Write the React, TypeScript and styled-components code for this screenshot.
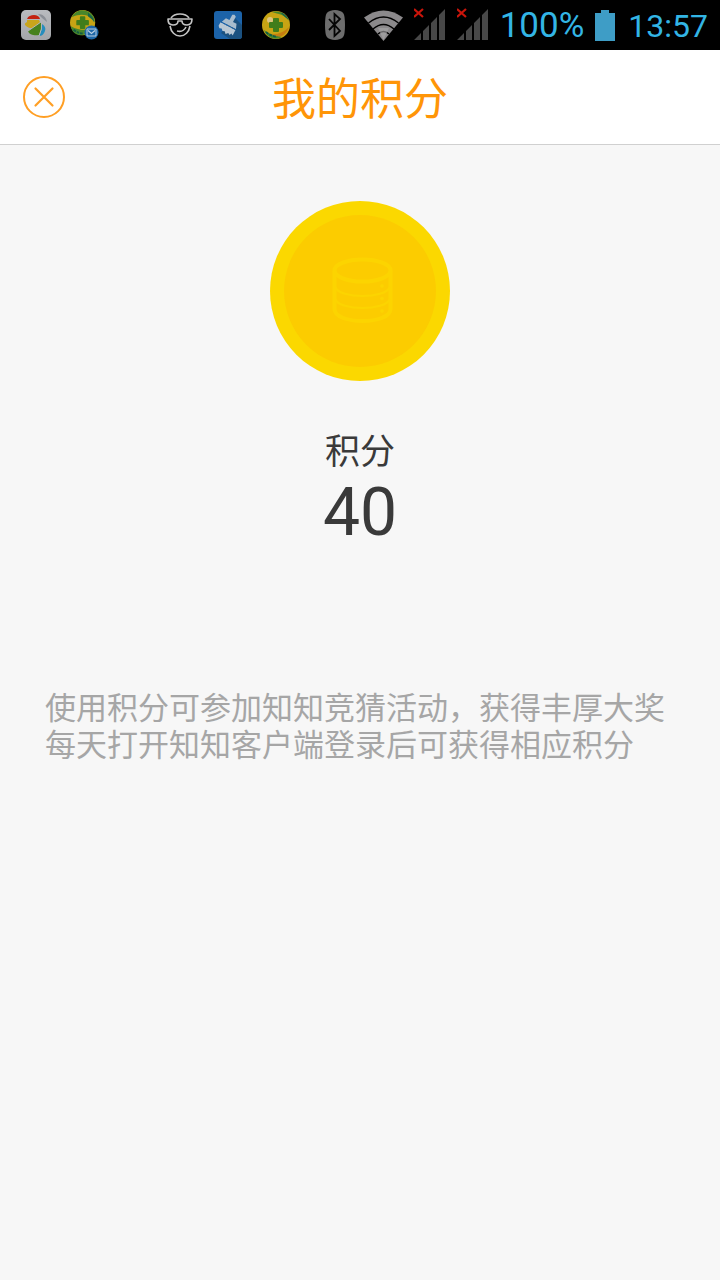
import React from 'react';
import styled, { createGlobalStyle } from 'styled-components';

const GlobalStyle = createGlobalStyle`
  *, *::before, *::after { box-sizing: border-box; }
  body {
    margin: 0;
    background: #f7f7f7;
    font-family: Roboto, "Noto Sans CJK SC", sans-serif;
  }
`;

const Screen = styled.div`
  min-height: 100vh;
  display: flex;
  flex-direction: column;
  background: #f7f7f7;
`;

const StatusBar = styled.div`
  height: 50px;
  display: flex;
  align-items: center;
  justify-content: space-between;
  padding: 0 12px;
  background: #000;
  color: #33b5e5;
`;

const Notifications = styled.div`
  display: flex;
`;

const Slot = styled.div`
  width: 48px;
  height: 50px;
  display: flex;
  align-items: center;
  justify-content: center;
`;

const Indicators = styled.div`
  display: flex;
  align-items: center;
  gap: 11px;

  svg { flex: none; }
`;

const BluetoothBox = styled.div`
  width: 28px;
  display: flex;
`;

const StatusText = styled.span<{ $size: number }>`
  font-size: ${(p) => p.$size}px;
  line-height: 50px;
  padding-top: 2px;
  white-space: nowrap;
`;

const Clock = styled(StatusText)`
  padding-left: 2px;
`;

const Header = styled.header`
  height: 95px;
  display: grid;
  grid-template-columns: 88px 1fr 88px;
  align-items: center;
  background: #fff;
  border-bottom: 1px solid #d0d0d0;
`;

const CloseButton = styled.button`
  justify-self: center;
  display: flex;
  padding: 0;
  border: 0;
  background: none;
  cursor: pointer;
`;

const Title = styled.h1`
  margin: 0;
  padding-top: 6px;
  text-align: center;
  font-size: 44px;
  font-weight: 400;
  line-height: 60px;
  color: #ff9507;
`;

const Main = styled.main`
  flex: 1;
  display: flex;
  flex-direction: column;
  padding: 56px 45px;
`;

const Score = styled.section`
  display: flex;
  flex-direction: column;
  align-items: center;
  color: #3a3a3a;
`;

const ScoreLabel = styled.h2`
  margin: 47px 0 0;
  font-size: 35px;
  font-weight: 400;
  line-height: 50px;
`;

const ScoreValue = styled.div`
  font-size: 66px;
  line-height: 70px;
`;

const Notes = styled.div`
  margin-top: 142px;
`;

const Note = styled.p`
  margin: 0;
  font-size: 31px;
  line-height: 37px;
  color: #a6a6a6;
`;

const PinwheelIcon = () => (
  <svg width="30" height="30" viewBox="0 0 30 30" aria-hidden="true">
    <defs>
      <linearGradient id="tile" x1="0" y1="0" x2="0" y2="1">
        <stop offset="0" stopColor="#b9bbbf" />
        <stop offset="1" stopColor="#a4a6aa" />
      </linearGradient>
    </defs>
    <rect width="30" height="30" rx="5" fill="url(#tile)" />
    <path d="M17 4c5 0 8 3 9 8l-5-4z" fill="#8b8f96" />
    <path d="M6 9C7 6 10 5 13 5s5 1 6 4z" fill="#c4210f" />
    <path d="M6 10h12l1 2-4 5c-4 2-8 1-10-1-2-2-1-3 1-4z" fill="#c9a51c" />
    <path d="M20 12L7 21c1 4 7 5 11 4 2-4 3-8 2-13z" fill="#46811d" />
    <path d="M21 14c3 2 4 4 3 7-1 3-3 5-6 5 2-4 3-7 3-12z" fill="#268dbd" />
    <path d="M20 12L7 21M20.500 12q1 7-2.500 14" stroke="#b3b5b9" strokeWidth="1" fill="none" />
  </svg>
);

const ShieldIcon = () => (
  <svg width="28" height="28" viewBox="0 0 28 28" aria-hidden="true">
    <circle cx="14" cy="14" r="14" fill="#c7a414" />
    <path d="M27 16c-2 6-6 11-14 10-3 0-5-1-6-3 9 1 15-2 20-7z" fill="#c57d10" />
    <path d="M10 1c7-2 15 2 17 9-3-4-6-6-10-7-3-1-5-1-7-2z" fill="#48862b" />
    <path d="M18 1c4 1 7 4 9 8l-4-3z" fill="#17644c" />
    <path d="M2 19c4 3 9 6 18 7-7 4-15 1-18-7z" fill="#48862b" />
    <path d="M4 21c3 3 7 4 11 5" stroke="#125c45" strokeWidth="2" strokeDasharray="3 1" fill="none" />
    <circle cx="8" cy="9" r="3" fill="#ddc582" />
    <path d="M12 8h4v4h4v4h-4v4h-4v-4H8v-4h4z" fill="#417d1b" stroke="#417d1b" strokeWidth="2" strokeLinejoin="round" />
  </svg>
);

const ShieldMailIcon = () => (
  <svg width="30" height="30" viewBox="0 0 30 30" aria-hidden="true">
    <g transform="translate(1 0) scale(.9)">
      <circle cx="14" cy="14" r="14" fill="#c7a414" />
      <path d="M2 8C7-2 20-2 26 7l2 7C24 7 15 2 2 8z" fill="#48862b" />
      <path d="M20 3c4 3 7 7 7 11-2-4-5-5-7-7z" fill="#17644c" />
      <path d="M1 18c5 3 10 4 16 4v5C9 30 2 26 1 18z" fill="#48862b" />
      <path d="M4 22c4 3 7 4 11 4" stroke="#125c45" strokeWidth="2" strokeDasharray="3 1" fill="none" />
      <path d="M12 8h4v4h4v4h-4v4h-4v-4H8v-4h4z" fill="#417d1b" stroke="#417d1b" strokeWidth="2" strokeLinejoin="round" />
    </g>
    <circle cx="22.500" cy="22.500" r="7" fill="#1d67a8" />
    <path d="M18 19h9v7h-9z" fill="#1d67a8" stroke="#b9cfe2" />
    <path d="M19 20.500l3.500 3 3.500-3" stroke="#b9cfe2" strokeWidth="1.200" fill="none" />
  </svg>
);

const CoolFaceIcon = () => (
  <svg width="26" height="26" viewBox="0 0 26 26" fill="none" stroke="#c4c4c4" strokeWidth="1.600" aria-hidden="true">
    <path d="M4 6C6 3 9 2 13 2s7 1 9 4M3 14c1 6 5 10 10 10s9-4 10-10" />
    <path d="M1 7h24c0 4-1 6-5 6-3 0-5-1-5-4h-4c0 3-2 4-5 4-4 0-5-2-5-6z" strokeLinejoin="round" />
    <path d="M10 19c4 1 7 0 9-4" />
  </svg>
);

const BroomIcon = () => (
  <svg width="28" height="28" viewBox="0 0 28 28" aria-hidden="true">
    <rect width="28" height="28" rx="3" fill="#1c63a9" />
    <path d="M20 6l8 8v11q0 3-3 3h-9l-9-6z" fill="#1b5180" />
    <g transform="rotate(28 14 14)">
      <path d="M15 2l2 1v6h4l2 5H7l2-5h4V3z" fill="#a9bccd" />
      <path d="M6 15h17v6l-2-1-1 2-2-1-2 2-2-2-2 1-2-2-2 1-2-2z" fill="#b9c7d4" />
      <path d="M6 14.500h17" stroke="#1c63a9" strokeDasharray="2 1" />
    </g>
  </svg>
);

const BluetoothIcon = () => (
  <svg width="20" height="30" viewBox="0 0 20 30" aria-hidden="true">
    <path d="M5 1Q10-1 15 1q4 1 4.500 6 1 8 0 16-.5 5-4.500 6-5 2-10 0-4-1-4.500-6-1-8 0-16Q1 2 5 1z" fill="#6d6d6d" />
    <path d="M4 9l11 12-5.500 5V4L15 9 4 20" fill="none" stroke="#050505" strokeWidth="1.800" />
  </svg>
);

const WifiIcon = () => (
  <svg width="39" height="31" viewBox="0 0 39 31" aria-hidden="true">
    <path d="M0 7.500Q19.500-6.500 39 7.500L19.500 31z" fill="#8b898b" />
    <path d="M4.500 13Q19.500 1 34.500 13M9 19q10.500-9 21 0M14 24q5.500-5 11 0" fill="none" stroke="#000" strokeWidth="1.400" />
    <path d="M14 18h11l-5.500 12z" fill="#aaa9aa" opacity=".6" />
  </svg>
);

const SignalIcon = () => (
  <svg width="32" height="34" viewBox="0 0 32 34" aria-hidden="true">
    <path d="M0 32l7-7v7zM9 32V23L15 17V32zM17 32V15L23 9V32zM25 32V7L31 1V32z" fill="#484848" />
    <path d="M0 1l9 8M9 1l-9 8" stroke="#c9150b" strokeWidth="2.200" />
  </svg>
);

const BatteryIcon = () => (
  <svg width="20" height="31" viewBox="0 0 20 31" aria-hidden="true">
    <path d="M6 0h8v3h6v28H0V3h6z" fill="#3e9dc6" />
  </svg>
);

const CloseIcon = () => (
  <svg width="42" height="42" viewBox="0 0 42 42" fill="none" stroke="#ff9f24" strokeWidth="2" strokeLinecap="round" aria-hidden="true">
    <circle cx="21" cy="21" r="20" />
    <path d="M12.500 12.500l17 17M29.500 12.500l-17 17" strokeWidth="2.200" />
  </svg>
);

const CoinIcon = () => (
  <svg width="180" height="180" viewBox="0 0 180 180" aria-hidden="true">
    <circle cx="90" cy="90" r="90" fill="#fbd800" />
    <circle cx="90" cy="90" r="76" fill="#fccc00" />
    <g fill="none" stroke="#fcd400">
      <g strokeWidth="4">
        <ellipse cx="92.500" cy="69.500" rx="28" ry="11" />
        <path d="M64.500 70v38c0 16 56 16 56 0V70" />
      </g>
      <path d="M65 86c5 12 50 12 55 0M65 98c5 12 50 12 55 0" strokeWidth="2" />
    </g>
    <g fill="#fcd400">
      <circle cx="112" cy="85" r="1.800" />
      <circle cx="112" cy="97.500" r="1.800" />
      <circle cx="112" cy="110" r="1.800" />
    </g>
  </svg>
);

export default function App() {
  return (
    <Screen>
      <GlobalStyle />
      <StatusBar>
        <Notifications>
          <Slot><PinwheelIcon /></Slot>
          <Slot><ShieldMailIcon /></Slot>
          <Slot />
          <Slot><CoolFaceIcon /></Slot>
          <Slot><BroomIcon /></Slot>
          <Slot><ShieldIcon /></Slot>
        </Notifications>
        <Indicators>
          <BluetoothBox><BluetoothIcon /></BluetoothBox>
          <WifiIcon />
          <SignalIcon />
          <SignalIcon />
          <StatusText $size={35}>100%</StatusText>
          <BatteryIcon />
          <Clock $size={32}>13:57</Clock>
        </Indicators>
      </StatusBar>
      <Header>
        <CloseButton type="button" aria-label="关闭"><CloseIcon /></CloseButton>
        <Title>我的积分</Title>
      </Header>
      <Main>
        <Score>
          <CoinIcon />
          <ScoreLabel>积分</ScoreLabel>
          <ScoreValue>40</ScoreValue>
        </Score>
        <Notes>
          <Note>使用积分可参加知知竞猜活动，获得丰厚大奖</Note>
          <Note>每天打开知知客户端登录后可获得相应积分</Note>
        </Notes>
      </Main>
    </Screen>
  );
}
